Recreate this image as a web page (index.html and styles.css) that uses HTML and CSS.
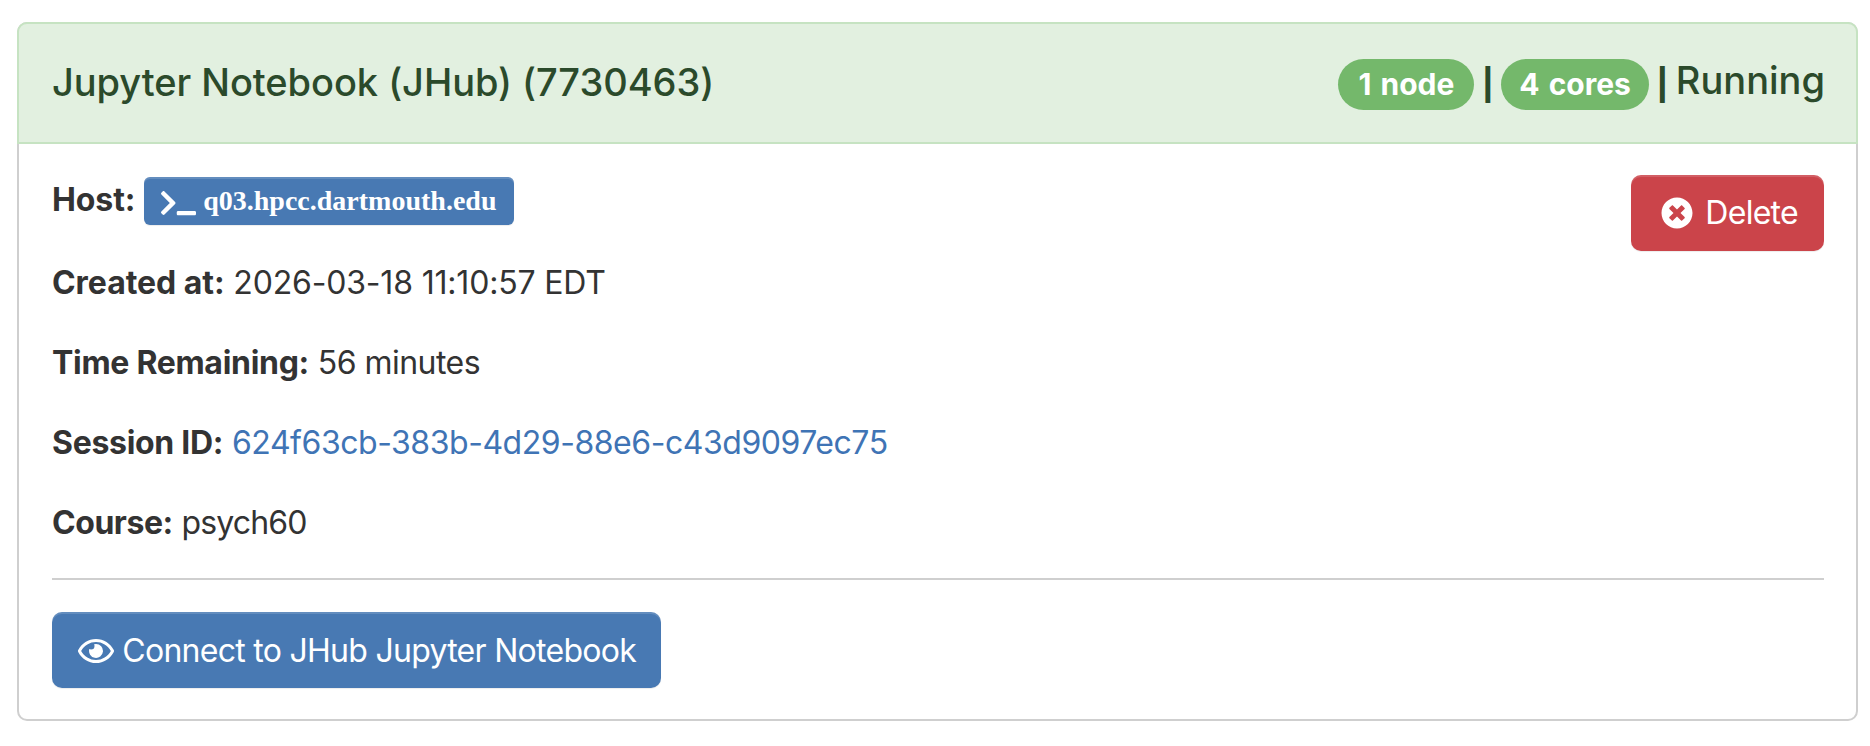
FILE: index.html
```html
<!DOCTYPE html>
<html lang="en">
<head>
<meta charset="utf-8">
<title>Session</title>
<link rel="stylesheet" href="styles.css">
</head>
<body>
<section class="card">
  <header class="card-head">
    <h1 class="title">Jupyter Notebook (JHub) (7730463)</h1>
    <div class="status"><span class="pill">1 node</span> <span class="sep">|</span> <span class="pill pill-cores">4 cores</span> <span class="sep">|</span> Running</div>
  </header>
  <div class="card-body">
    <div class="top">
      <div class="rows">
        <p class="row host"><strong>Host:</strong> <a class="host-badge" href="#"><svg class="ic-term" viewBox="0 0 640 512"><path d="M257.981 272.971L63.638 467.314c-9.373 9.373-24.569 9.373-33.941 0L7.029 444.647c-9.357-9.357-9.375-24.522-.04-33.901L161.011 256 6.99 101.255c-9.335-9.379-9.317-24.544.04-33.901l22.667-22.667c9.373-9.373 24.569-9.373 33.941 0L257.981 239.03c9.373 9.372 9.373 24.568 0 33.941zM640 456v-32c0-13.255-10.745-24-24-24H312c-13.255 0-24 10.745-24 24v32c0 13.255 10.745 24 24 24h304c13.255 0 24-10.745 24-24z"/></svg> q03.hpcc.dartmouth.edu</a></p>
        <p class="row created"><strong>Created at:</strong> 2026-03-18 11:10:57 EDT</p>
        <p class="row remaining"><strong>Time Remaining:</strong> <span class="val">56 minutes</span></p>
        <p class="row session"><strong>Session ID:</strong> <a class="link" href="#">624f63cb-383b-4d29-88e6-c43d9097ec75</a></p>
        <p class="row course"><strong>Course:</strong> <span class="val">psych60</span></p>
      </div>
      <a class="btn btn-danger" href="#"><svg class="ic" viewBox="0 0 512 512"><path d="M256 8C119 8 8 119 8 256s111 248 248 248 248-111 248-248S393 8 256 8zm121.6 313.1c4.7 4.7 4.7 12.3 0 17L338 377.6c-4.7 4.7-12.3 4.7-17 0L256 312l-65.1 65.6c-4.7 4.7-12.3 4.7-17 0L134.4 338c-4.7-4.7-4.7-12.3 0-17l65.6-65-65.6-65.1c-4.7-4.7-4.7-12.3 0-17l39.6-39.6c4.7-4.7 12.3-4.7 17 0l65 65.7 65.1-65.6c4.7-4.7 12.3-4.7 17 0l39.6 39.6c4.7 4.7 4.7 12.3 0 17L312 256l65.6 65.1z"/></svg> Delete</a>
    </div>
    <hr class="rule">
    <a class="btn btn-primary" href="#"><svg class="ic-eye" viewBox="0 0 576 512"><path d="M288 144a110.94 110.94 0 0 0-31.24 5 55.4 55.4 0 0 1 7.24 27 56 56 0 0 1-56 56 55.4 55.4 0 0 1-27-7.24A111.71 111.71 0 1 0 288 144zm284.52 97.4C518.29 135.59 410.93 64 288 64S57.68 135.64 3.48 241.41a32.35 32.35 0 0 0 0 29.19C57.71 376.41 165.07 448 288 448s230.32-71.64 284.52-177.41a32.35 32.35 0 0 0 0-29.19zM288 400c-98.65 0-189.09-55-237.93-144C98.91 167 189.34 112 288 112s189.09 55 237.93 144C477.1 345 386.66 400 288 400z"/></svg> Connect to JHub Jupyter Notebook</a>
  </div>
</section>
</body>
</html>
```

FILE: styles.css
```css
html, body { margin: 0; padding: 0; background: #fff; }
body { padding: 22px 12px 0 17px; font-family: Inter, "Liberation Sans", sans-serif; font-size: 32px; line-height: 40px; color: #333; letter-spacing: -.18px; }
.card { border: 2px solid #cfcfcf; border-radius: 10px; height: 699px; box-sizing: border-box; }
.card-head { display: flex; justify-content: space-between; align-items: center; height: 122px; box-sizing: border-box; margin: -2px -2px 0; padding: 0 31px 0 33px; background: #e2f0e0; border: 2px solid #c6e3c2; border-radius: 10px 10px 0 0; color: #2b4a2b; }
.title { margin: 0 0 2px; font-size: 38px; font-weight: 500; line-height: 48px; letter-spacing: -.05px; }
.status { font-size: 38px; line-height: 48px; font-weight: 500; letter-spacing: 0; word-spacing: -2px; }
.pill { display: inline-block; background: #74b86b; color: #fff; font-size: 30px; font-weight: 700; line-height: 51px; padding: 0 20px; border-radius: 26px; vertical-align: middle; word-spacing: 2px; }
.pill-cores { padding: 0 18px; }
.sep { font-family: "Liberation Sans", sans-serif; font-weight: 700; font-size: 38px; }
.card-body { padding: 31px 32px 0 33px; }
.top { display: flex; justify-content: space-between; align-items: flex-start; }
.rows { padding-top: 5px; }
.row { margin: 0 0 40px; }
.row:last-child { margin-bottom: 0; }
.host { margin-bottom: 41px; }
.row strong { letter-spacing: -.1px; }
.created strong { letter-spacing: -.05px; }
.remaining strong { letter-spacing: -.3px; }
.session strong { letter-spacing: -.3px; }
.course strong { letter-spacing: -.45px; }
.remaining .val { letter-spacing: -.54px; }
.course .val { letter-spacing: -.86px; }
.host-badge { display: inline-block; background: #4879b3; color: #fff; font-family: "Liberation Serif", serif; font-weight: 700; font-size: 28px; line-height: 48px; height: 48px; margin: -5px 0 -3px; padding: 0 18px 0 17px; border-radius: 6px; letter-spacing: 0; text-decoration: none; box-shadow: inset 0 2px 0 rgba(255,255,255,.15), 0 1px 1px rgba(0,0,0,.075); vertical-align: middle; }
.ic-term { width: 35px; height: 28px; fill: #fff; vertical-align: -7px; }
.link { color: #3f74b5; text-decoration: none; letter-spacing: -.46px; }
.btn { display: inline-block; color: #fff; font-size: 32px; line-height: 44px; padding: 16px 26px 16px 26px; border-radius: 10px; text-decoration: none; letter-spacing: -.72px; box-shadow: inset 0 2px 0 rgba(255,255,255,.15), 0 1px 1px rgba(0,0,0,.075); }
.btn-danger { background: #cb444a; padding-left: 30px; }
.btn-danger .ic { margin-right: 4px; }
.btn-primary { background: #4879b3; padding: 17px 25px 15px 26px; }
.ic { width: 32px; height: 32px; fill: #fff; vertical-align: -5px; }
.ic-eye { width: 36px; height: 32px; fill: #fff; vertical-align: -5px; }
.rule { border: 0; border-top: 2px solid #cfcfcf; margin: 35px 0 32px; }
```
